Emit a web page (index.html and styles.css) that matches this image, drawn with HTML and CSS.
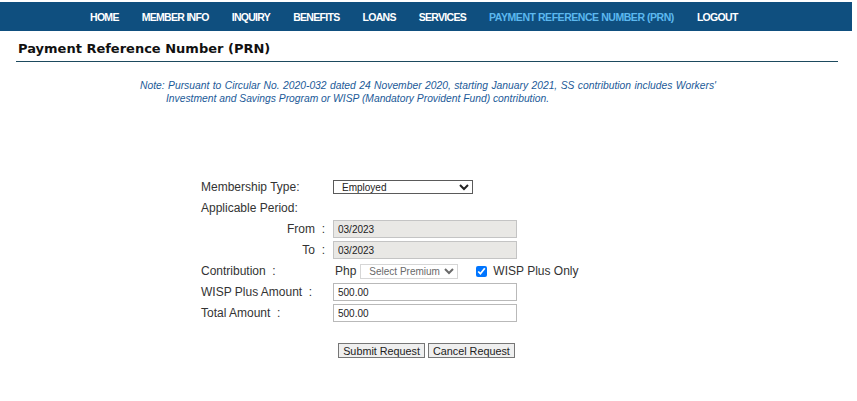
FILE: index.html
```html
<!doctype html>
<html>
<head>
<title>Payment Reference Number (PRN)</title>
<link rel="stylesheet" href="styles.css">
</head>
<body>
	<div class="navbar">
		<a class="navItem" href="#">HOME</a>
		<a class="navItem" href="#">MEMBER INFO</a>
		<a class="navItem" href="#">INQUIRY</a>
		<a class="navItem" href="#">BENEFITS</a>
		<a class="navItem" href="#">LOANS</a>
		<a class="navItem" href="#">SERVICES</a>
		<a class="navItem navActive" href="#">PAYMENT REFERENCE NUMBER (PRN)</a>
		<a class="navItem" href="#">LOGOUT</a>
	</div>

	<div class="pageHeader">
		<h1>Payment Reference Number (PRN)</h1>
	</div>

	<p class="note">Note: Pursuant to Circular No. 2020-032 dated 24 November 2020, starting January 2021, SS contribution includes Workers' Investment and Savings Program or WISP (Mandatory Provident Fund) contribution.</p>

	<form class="prnForm">
		<span class="formLabel">Membership Type:</span>
		<div class="formValue">
			<select class="fieldType">
				<option selected>Employed</option>
				<option>Self-Employed</option>
				<option>Voluntary</option>
			</select>
		</div>

		<span class="formLabel">Applicable Period:</span>
		<div class="formValue"></div>

		<span class="formLabel labelRight">From &nbsp;:</span>
		<div class="formValue"><input class="field fieldReadonly" value="03/2023" readonly></div>

		<span class="formLabel labelRight">To &nbsp;:</span>
		<div class="formValue"><input class="field fieldReadonly" value="03/2023" readonly></div>

		<span class="formLabel">Contribution &nbsp;:</span>
		<div class="formValue">
			<span class="currency">Php</span>
			<select class="fieldPremium" disabled>
				<option selected>Select Premium</option>
			</select>
			<label class="wispCheck"><input type="checkbox" checked> WISP Plus Only</label>
		</div>

		<span class="formLabel">WISP Plus Amount &nbsp;:</span>
		<div class="formValue"><input class="field" value="500.00"></div>

		<span class="formLabel">Total Amount &nbsp;:</span>
		<div class="formValue"><input class="field" value="500.00"></div>
	</form>

	<div class="formButtons">
		<button class="btn">Submit Request</button>
		<button class="btn">Cancel Request</button>
	</div>
</body>
</html>
```
FILE: styles.css
```css
body {
	margin: 0;
	font-family: "Liberation Sans", Arial, sans-serif;
	color: #333;
	background: #fff;
}

.navbar {
	display: flex;
	align-items: center;
	gap: 23px;
	margin: 2px 5px 0 0;
	height: 29px;
	padding-left: 90px;
	background-color: #0f4f7f;
}

.navItem {
	color: #fff;
	font-size: 10.5px;
	font-weight: bold;
	letter-spacing: -0.7px;
	text-decoration: none;
	white-space: nowrap;
}

.navActive {
	color: #5cb8ef;
	letter-spacing: -0.45px;
}

.pageHeader {
	margin: 0 19px 0 16px;
	padding: 10px 0 5px 2px;
	border-bottom: 1px solid #1d4a5e;
}

h1 {
	margin: 0;
	font-family: "DejaVu Sans", Verdana, sans-serif;
	font-size: 13px;
	font-weight: bold;
	color: #111;
}

.note {
	width: 550px;
	margin: 17px 0 0 140px;
	padding-left: 26px;
	text-indent: -26px;
	text-align: justify;
	font-size: 10.3px;
	font-style: italic;
	line-height: 13px;
	color: #1b5a98;
}

.prnForm {
	display: grid;
	grid-template-columns: 132px 300px;
	grid-auto-rows: 18px;
	row-gap: 3px;
	margin: 73px 0 0 201px;
	font-size: 12px;
}

.formLabel {
	display: flex;
	align-items: center;
	white-space: nowrap;
}

.labelRight {
	justify-content: flex-end;
	padding-right: 8px;
}

.formValue {
	display: flex;
	align-items: center;
}

.field {
	box-sizing: border-box;
	width: 184px;
	height: 18px;
	margin: 0;
	padding: 0 4px;
	border: 1px solid #b9b9b9;
	font-family: "Liberation Sans", Arial, sans-serif;
	font-size: 10px;
	color: #222;
	background: #fff;
}

.fieldReadonly {
	background-color: #e9e8e5;
	border-color: #c4c4c4;
}

.fieldType {
	box-sizing: border-box;
	width: 140px;
	height: 14px;
	margin: 0;
	padding: 0 0 0 4px;
	border: 1px solid #5a5a5a;
	font-family: "Liberation Sans", Arial, sans-serif;
	font-size: 10px;
	color: #222;
	background: #fff;
}

.currency {
	margin: 0 4px 0 2px;
}

.fieldPremium {
	box-sizing: border-box;
	width: 98px;
	height: 15px;
	margin: 0;
	padding: 0 0 0 4px;
	border: 1px solid #d6d6d6;
	font-family: "Liberation Sans", Arial, sans-serif;
	font-size: 10px;
	color: #6a6a6a;
	background: #fff;
	opacity: 1;
}

.wispCheck {
	display: flex;
	align-items: center;
	margin-left: 18px;
	white-space: nowrap;
}

.wispCheck input {
	width: 11px;
	height: 11px;
	margin: 0 6px 0 0;
}

.formButtons {
	display: flex;
	justify-content: center;
	gap: 3px;
	margin-top: 21px;
	padding-right: 4px;
}

.btn {
	height: 15px;
	padding: 0 4px;
	border: 1px solid #767676;
	border-radius: 0;
	background-color: #efefef;
	font-family: "Liberation Sans", Arial, sans-serif;
	font-size: 10.8px;
	line-height: 12px;
	color: #222;
}
```
